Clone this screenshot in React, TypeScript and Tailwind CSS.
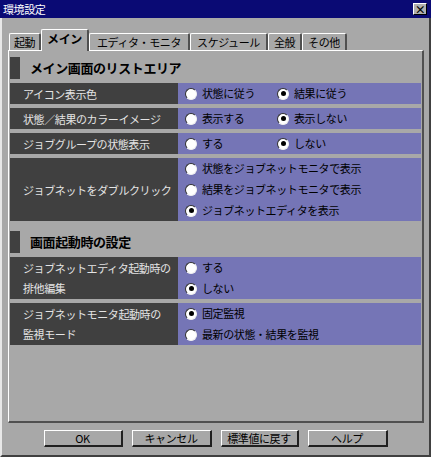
import React from "react";

const jp = "font-['Noto_Sans_CJK_JP','Noto_Sans',sans-serif]";

function Radio({ on }: { on?: boolean }) {
  return (
    <span className="relative w-[12px] h-[12px] shrink-0 rounded-full bg-white border border-[#303030] border-r-[#f0f0f0] border-b-[#f0f0f0] flex items-center justify-center">
      {on && <span className="w-[5px] h-[5px] rounded-full bg-black" />}
    </span>
  );
}

function Opt({ label, on, w }: { label: string; on?: boolean; w?: string }) {
  return (
    <div className={`flex items-center gap-[5px] h-[21px] ${w ?? ""}`}>
      <Radio on={on} />
      <span className="text-black">{label}</span>
    </div>
  );
}

function Header({ title, tall }: { title: string; tall?: boolean }) {
  return (
    <div className={`flex items-stretch ${tall ? "h-[22px]" : "h-[22px]"}`}>
      <div className="w-[10px] bg-[#404040]" />
      <div className="ml-[10px] flex items-center text-[13px] font-bold text-black">{title}</div>
    </div>
  );
}

function Row({ label, h, children }: { label: React.ReactNode; h: string; children: React.ReactNode }) {
  return (
    <div className={`flex ${h}`}>
      <div className="w-[168px] bg-[#404040] text-[#e4e4e4] pl-[13px] flex items-center leading-[20px]">{label}</div>
      <div className="flex-1 bg-[#7575b6] pl-[7px] flex">{children}</div>
    </div>
  );
}

const tabs = [
  { t: "起動", w: "w-[32px]" },
  { t: "メイン", w: "w-[48px]", sel: true },
  { t: "エディタ・モニタ", w: "w-[101px]" },
  { t: "スケジュール", w: "w-[78px]" },
  { t: "全般", w: "w-[34px]" },
  { t: "その他", w: "w-[45px]" },
];

export default function App() {
  return (
    <div className={`w-[431px] h-[457px] bg-[#a8a8a8] flex flex-col text-[11px] tracking-[-0.4px] ${jp}`}>
      <div className="h-[18px] bg-[#0a0a74] flex items-center justify-between pl-[3px] pr-[4px]">
        <span className="text-white text-[11px]">環境設定</span>
        <div className="w-[14px] h-[12px] bg-[#b0b0b0] border border-white border-r-black border-b-black flex items-center justify-center text-[11px] font-bold leading-none text-black">
          ×
        </div>
      </div>
      <div className="flex-1 flex flex-col border-l-2 border-l-[#e8e8e8] border-r-2 border-r-[#404040] border-b-2 border-b-[#404040]">
        <div className="flex items-end pl-[7px] pt-[11px] h-[32px]">
          {tabs.map((x) =>
            x.sel ? (
              <div
                key={x.t}
                className={`${x.w} h-[22px] -mb-px z-10 bg-[#a8a8a8] border-t border-l border-white border-r-2 border-r-[#505050] rounded-t-[2px] flex items-center justify-center font-bold text-[12px] text-black pb-[3px]`}
              >
                {x.t}
              </div>
            ) : (
              <div
                key={x.t}
                className={`${x.w} h-[17px] bg-[#a8a8a8] border-t border-l border-white border-r-2 border-r-[#505050] rounded-t-[2px] flex items-center justify-center text-black`}
              >
                {x.t}
              </div>
            )
          )}
        </div>
        <div className="ml-[6px] w-[416px] h-[373px] border-t border-l border-white border-r-2 border-r-[#505050] border-b-2 border-b-[#505050] pl-[1px] pr-[1px] pt-[6px] flex flex-col">
          <Header title="メイン画面のリストエリア" />
          <div className="mt-[4px] flex flex-col gap-[4px]">
            <Row label="アイコン表示色" h="h-[21px]">
              <Opt label="状態に従う" w="w-[92px]" />
              <Opt label="結果に従う" on />
            </Row>
            <Row label="状態／結果のカラーイメージ" h="h-[21px]">
              <Opt label="表示する" w="w-[92px]" />
              <Opt label="表示しない" on />
            </Row>
            <Row label="ジョブグループの状態表示" h="h-[21px]">
              <Opt label="する" w="w-[92px]" />
              <Opt label="しない" on />
            </Row>
            <Row label="ジョブネットをダブルクリック" h="h-[63px]">
              <div className="flex flex-col">
                <Opt label="状態をジョブネットモニタで表示" />
                <Opt label="結果をジョブネットモニタで表示" />
                <Opt label="ジョブネットエディタを表示" on />
              </div>
            </Row>
          </div>
          <div className="mt-[10px]">
            <Header title="画面起動時の設定" />
          </div>
          <div className="mt-[4px] flex flex-col gap-[4px]">
            <Row
              label={
                <div>
                  ジョブネットエディタ起動時の
                  <br />
                  排他編集
                </div>
              }
              h="h-[42px]"
            >
              <div className="flex flex-col">
                <Opt label="する" />
                <Opt label="しない" on />
              </div>
            </Row>
            <Row
              label={
                <div>
                  ジョブネットモニタ起動時の
                  <br />
                  監視モード
                </div>
              }
              h="h-[42px]"
            >
              <div className="flex flex-col">
                <Opt label="固定監視" on />
                <Opt label="最新の状態・結果を監視" />
              </div>
            </Row>
          </div>
        </div>
        <div className="mt-[7px] flex justify-center gap-[9px]">
          {[
            { t: "OK", w: "w-[79px]" },
            { t: "キャンセル", w: "w-[80px]" },
            { t: "標準値に戻す", w: "w-[78px]" },
            { t: "ヘルプ", w: "w-[80px]" },
          ].map((b) => (
            <div
              key={b.t}
              className={`${b.w} h-[17px] bg-[#a8a8a8] border border-white border-r-2 border-b-2 border-r-[#202020] border-b-[#202020] flex items-center justify-center text-black`}
            >
              {b.t}
            </div>
          ))}
        </div>
      </div>
    </div>
  );
}
